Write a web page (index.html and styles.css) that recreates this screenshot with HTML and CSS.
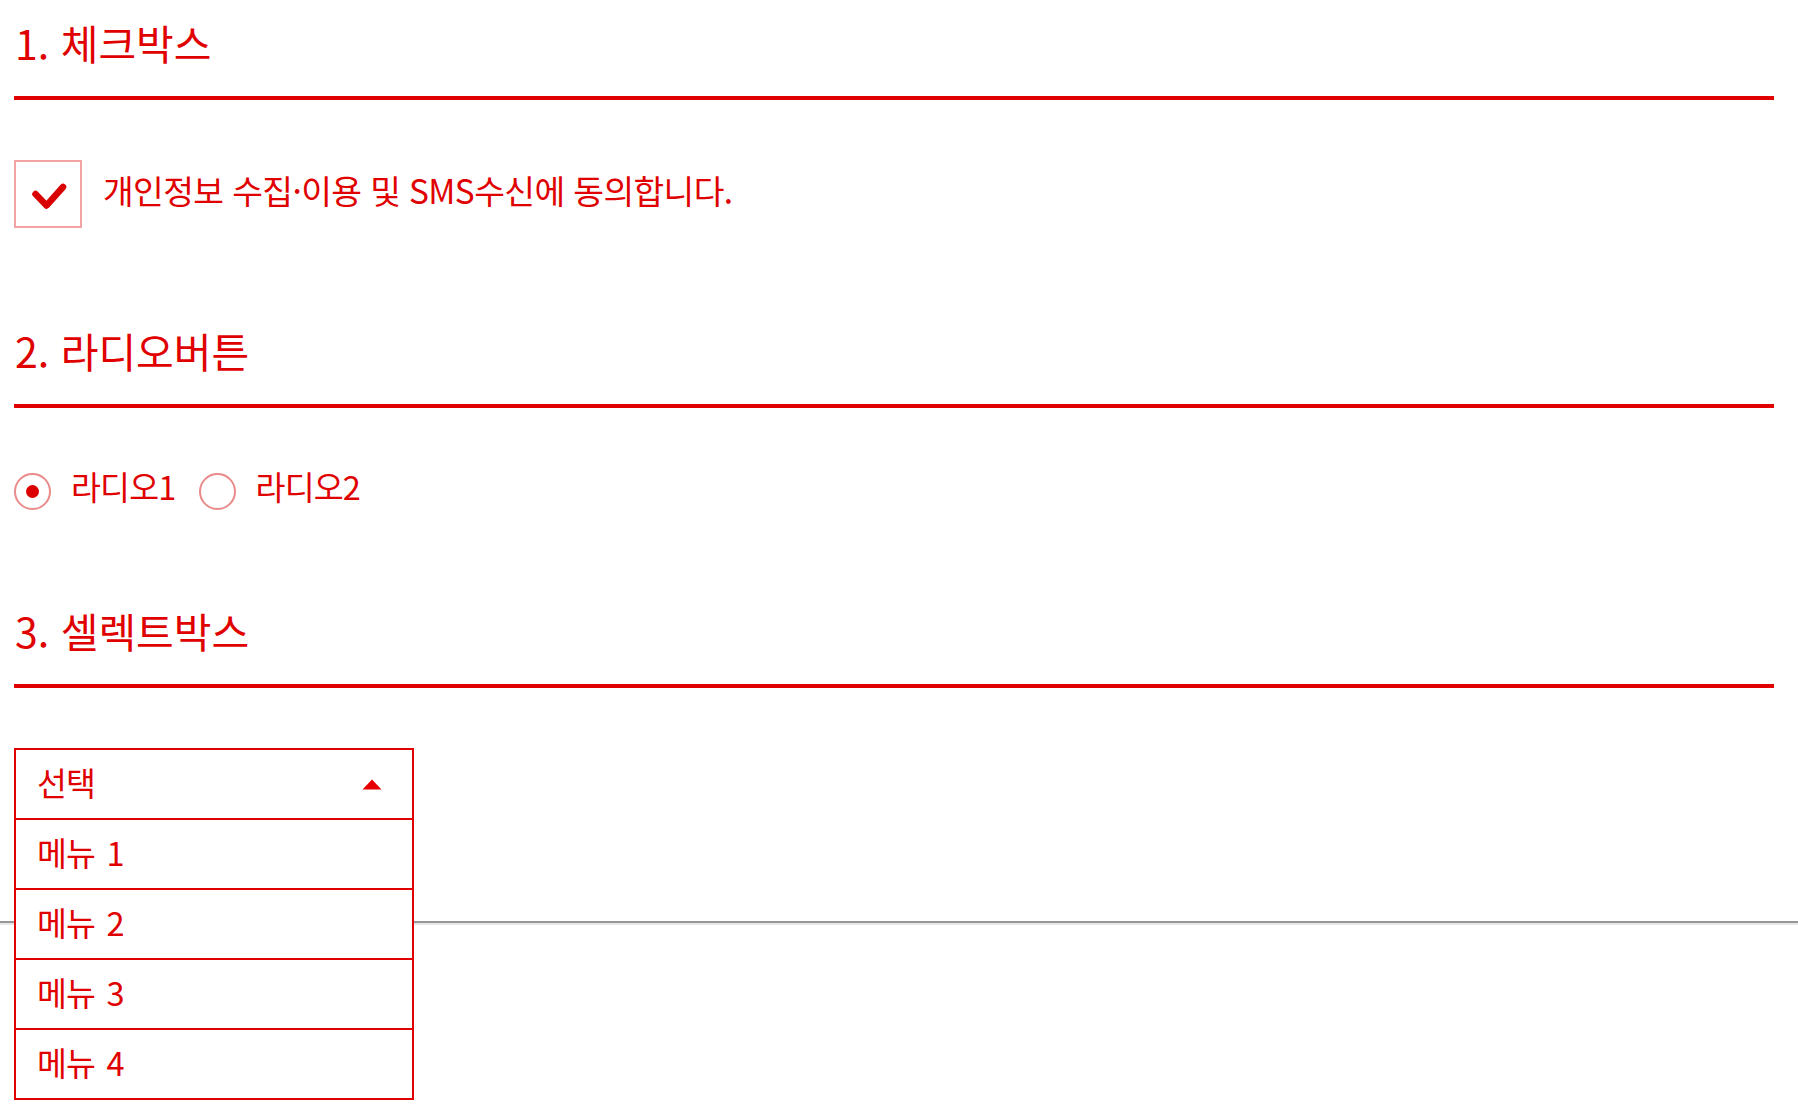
FILE: index.html
```html
<!DOCTYPE html>
<html lang="ko">
<head>
<meta charset="utf-8">
<title>폼 요소</title>
<link rel="stylesheet" href="styles.css">
</head>
<body>
<div class="page">
  <section class="section sec-check">
    <h2 class="sec-title">1. 체크박스</h2>
    <label class="check-row">
      <span class="check-box">
        <svg class="check-mark" width="64" height="64" viewBox="0 0 64 64"><polyline points="19.5,32 30.5,43.5 47,25" fill="none" stroke="#d90000" stroke-width="6.5" stroke-linecap="round" stroke-linejoin="round"/></svg>
      </span>
      <span class="check-label">개인정보 수집·이용 및 SMS수신에 동의합니다.</span>
    </label>
  </section>

  <section class="section sec-radio">
    <h2 class="sec-title">2. 라디오버튼</h2>
    <div class="radio-row">
      <label class="radio-item"><span class="radio radio-on"><span class="radio-dot"></span></span><span class="radio-label">라디오1</span></label>
      <label class="radio-item"><span class="radio"></span><span class="radio-label">라디오2</span></label>
    </div>
  </section>

  <section class="section sec-select">
    <h2 class="sec-title">3. 셀렉트박스</h2>
    <div class="select">
      <div class="select-head">
        <span class="select-text">선택</span>
        <svg class="select-arrow" width="20" height="11" viewBox="0 0 20 11"><polygon points="10,0.5 19.5,10.5 0.5,10.5" fill="#e60000"/></svg>
      </div>
      <ul class="options">
        <li class="option">메뉴 1</li>
        <li class="option">메뉴 2</li>
        <li class="option">메뉴 3</li>
        <li class="option">메뉴 4</li>
      </ul>
    </div>
  </section>
</div>
<hr class="rule">
</body>
</html>
```
FILE: styles.css
```css
html, body {
  margin: 0;
  padding: 0;
  background: #ffffff;
}
body {
  min-height: 1120px;
  font-family: "Noto Sans CJK KR", "Noto Sans", sans-serif;
  color: #e00000;
}
.page {
  width: 1760px;
  padding-left: 14px;
}
.section {
  display: flex;
  flex-direction: column;
  align-items: flex-start;
}
.sec-title {
  align-self: stretch;
  margin: 0;
  padding: 20px 0 32px 1px;
  font-size: 41px;
  line-height: 44px;
  font-weight: 400;
  letter-spacing: 0;
  border-bottom: 4px solid #e00000;
}
.sec-radio .sec-title { margin-top: 80px; }
.sec-select .sec-title { margin-top: 78px; }

/* checkbox */
.check-row {
  display: flex;
  align-items: center;
  gap: 21px;
  margin-top: 60px;
}
.check-box {
  width: 68px;
  height: 68px;
  box-sizing: border-box;
  border: 2px solid #f3a3a3;
  display: flex;
}
.check-label {
  font-size: 33.4px;
  line-height: 40px;
  letter-spacing: -0.6px;
  margin-top: -8px;
}

/* radio */
.radio-row {
  display: flex;
  align-items: center;
  margin-top: 65px;
}
.radio-item {
  display: flex;
  align-items: center;
}
.radio-item + .radio-item { margin-left: 23px; }
.radio {
  width: 37px;
  height: 37px;
  box-sizing: border-box;
  border: 2px solid #ea8a8a;
  border-radius: 50%;
  display: flex;
  align-items: center;
  justify-content: center;
}
.radio-dot {
  width: 13px;
  height: 13px;
  border-radius: 50%;
  background: #dc0000;
}
.radio-label {
  margin-left: 20px;
  font-size: 32.5px;
  line-height: 36px;
  letter-spacing: -0.8px;
  margin-top: -12px;
}

/* select */
.select {
  position: relative;
  width: 400px;
  box-sizing: border-box;
  border: 2px solid #e00000;
  margin-top: 60px;
}
.select-head {
  height: 68px;
  display: flex;
  align-items: center;
  justify-content: space-between;
  padding: 0 30px 0 21px;
}
.select-text, .option {
  font-size: 32.5px;
  line-height: 36px;
  letter-spacing: -0.8px;
  word-spacing: 3px;
}
.select-text { margin-top: -4px; }
.options {
  position: absolute;
  top: calc(100% + 2px);
  left: -2px;
  width: 400px;
  box-sizing: border-box;
  margin: 0;
  padding: 0;
  list-style: none;
  background: #ffffff;
  border: 2px solid #e00000;
  border-top: 0;
}
.option {
  height: 68px;
  box-sizing: border-box;
  display: flex;
  align-items: center;
  padding: 0 0 4px 21px;
}
.option + .option { height: 70px; border-top: 2px solid #e00000; }

.rule {
  margin: 101px 0 0 0;
  height: 0;
  border: 0;
  border-top: 2px solid #979797;
  border-bottom: 2px solid #e6e6e6;
}
```
